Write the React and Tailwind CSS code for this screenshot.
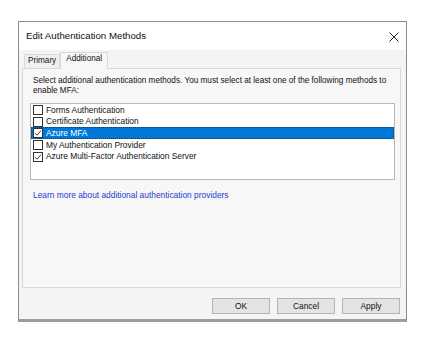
import React, { useState } from "react";

const METHODS = [
  { label: "Forms Authentication", checked: false },
  { label: "Certificate Authentication", checked: false },
  { label: "Azure MFA", checked: true, selected: true },
  { label: "My Authentication Provider", checked: false },
  { label: "Azure Multi-Factor Authentication Server", checked: true },
];

function CheckBox({ checked }) {
  return (
    <span className="flex h-[10px] w-[10px] shrink-0 items-center justify-center border border-[#333] bg-white">
      {checked && (
        <svg width="8" height="8" viewBox="0 0 8 8">
          <path d="M1 4.2 L3 6.2 L7 1.6" fill="none" stroke="#222" strokeWidth="0.9" />
        </svg>
      )}
    </span>
  );
}

function MethodRow({ item }) {
  return (
    <div
      className={
        "flex h-[11.7px] items-center gap-[3px] pl-[2px] " +
        (item.selected ? "bg-[#0078d7] text-white outline-1 outline-dotted outline-[#1b3a5c] -outline-offset-1" : "text-[#111]")
      }
    >
      <CheckBox checked={item.checked} />
      <span className="leading-none">{item.label}</span>
    </div>
  );
}

function Button({ children }) {
  return (
    <button className="flex h-[16px] w-[58px] items-center justify-center border border-[#b4b4b4] bg-[#e3e3e3] text-[8.4px] text-[#111]">
      {children}
    </button>
  );
}

export default function App() {
  const [items] = useState(METHODS);

  return (
    <div className="h-[350px] w-[430px] bg-white pl-[18px] pt-[21px] font-['Liberation_Sans',Arial,sans-serif]">
      <div className="flex h-[301px] w-[389px] flex-col border border-b-[3px] border-[#8c8c8c] border-b-[#9d9d9d] bg-[#f4f4f4]">
        {/* title bar */}
        <div className="flex h-[28px] items-center justify-between bg-white pl-[7px] pr-[7px] pt-[1px]">
          <span className="text-[9.7px] text-[#111]">Edit Authentication Methods</span>
          <svg width="10" height="10" viewBox="0 0 10 10">
            <path d="M0.5 0.5 L9.5 9.5 M9.5 0.5 L0.5 9.5" stroke="#222" strokeWidth="1" />
          </svg>
        </div>

        {/* tabs */}
        <div className="flex items-end pl-[5px] pt-[2px]">
          <div className="flex h-[14px] items-center border border-b-0 border-[#d9d9d9] bg-[#f0f0f0] px-[3px] text-[8.2px] text-[#111]">
            Primary
          </div>
          <div className="relative -mb-px flex h-[17px] items-center border border-b-0 border-[#d9d9d9] bg-[#f7f7f7] px-[5px] pb-[3px] text-[8.2px] text-[#111]">
            Additional
          </div>
        </div>

        {/* tab page */}
        <div className="ml-[3px] mr-[5px] flex h-[220px] flex-col border border-[#d9d9d9] bg-[#f7f7f7] pl-[7px] pr-[5px] pt-[7px] text-[8.4px]">
          <p className="pl-[3px] text-[8.2px] leading-[10px] text-[#111]">
            Select additional authentication methods. You must select at least one of the following methods
            to enable MFA:
          </p>
          <div className="mt-[7px] flex h-[77px] flex-col border border-[#b9b9b9] bg-white">
            {items.map((item) => (
              <MethodRow key={item.label} item={item} />
            ))}
          </div>
          <a className="mt-[9px] pl-[3px] text-[#2540d0]">
            Learn more about additional authentication providers
          </a>
        </div>

        {/* buttons */}
        <div className="flex justify-end gap-[7px] pr-[6px] pt-[10px]">
          <Button>OK</Button>
          <Button>Cancel</Button>
          <Button>Apply</Button>
        </div>
      </div>
    </div>
  );
}
